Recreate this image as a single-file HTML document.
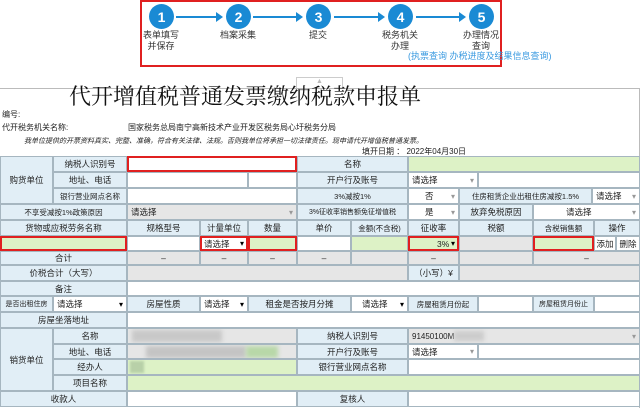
<!DOCTYPE html><html><head><meta charset="utf-8"><style>
body{margin:0;width:640px;height:407px;overflow:hidden;background:#fff;font-family:"Liberation Sans","Noto Sans CJK SC",sans-serif;position:relative}
.c{position:absolute;box-sizing:border-box;border:1px solid #a6b6c0;font-size:8.5px;color:#222;display:flex;align-items:center;justify-content:center;white-space:nowrap;overflow:hidden}
.l{background:#e1eef6}.w{background:#fff}.g{background:#ddf2c6}.y{background:#e6e6e6}
.r{outline:2px solid #e02020;outline-offset:-2px}
.s{justify-content:flex-start;padding-left:3px}
.s::after{content:"▾";position:absolute;right:3px;font-size:8px;color:#999}
.k::after{color:#000}
.sm{font-size:7.5px}
.t{position:absolute;font-size:9px;color:#222;white-space:nowrap}
.circ{position:absolute;width:25px;height:25px;border-radius:50%;background:#1a8ad4;color:#fff;font-weight:bold;font-size:14px;display:flex;align-items:center;justify-content:center;top:4px}
.ar{position:absolute;top:16px;height:2px;background:#1a8ad4}
.ar::after{content:"";position:absolute;right:-2px;top:-4px;border-left:7px solid #1a8ad4;border-top:5px solid transparent;border-bottom:5px solid transparent}
.lb{position:absolute;top:30px;font-size:9px;color:#333;text-align:center;line-height:11px;width:50px}
</style></head><body>
<div style="position:absolute;left:140px;top:0;width:362px;height:67px;border:2px solid #e02020;box-sizing:border-box"></div>
<div class="circ" style="left:149px">1</div><div class="circ" style="left:226px">2</div><div class="circ" style="left:306px">3</div><div class="circ" style="left:388px">4</div><div class="circ" style="left:469px">5</div>
<div class="ar" style="left:176px;width:45px"></div><div class="ar" style="left:253px;width:48px"></div><div class="ar" style="left:334px;width:49px"></div><div class="ar" style="left:416px;width:48px"></div>
<div class="lb" style="left:136px">表单填写<br>并保存</div><div class="lb" style="left:213px">档案采集</div><div class="lb" style="left:293px">提交</div><div class="lb" style="left:375px">税务机关<br>办理</div><div class="lb" style="left:456px">办理情况<br>查询</div>
<div class="t" style="left:408px;top:49px;color:#3a9ae0">(执票查询 办税进度及结果信息查询)</div>
<div style="position:absolute;left:296px;top:77px;width:47px;height:12px;border:1px solid #ccc;border-bottom:none;box-sizing:border-box;font-size:7px;color:#bbb;text-align:center">▲</div>
<div style="position:absolute;left:0;top:88px;width:640px;height:320px;border-top:1px solid #bbb;border-right:1px solid #bbb;box-sizing:border-box"></div>
<div style="position:absolute;left:69px;top:80px;font-size:22px;font-family:'Noto Serif CJK SC','Noto Sans CJK SC',serif;color:#111">代开增值税普通发票缴纳税款申报单</div>
<div class="t" style="left:2px;top:109px;font-size:8px">编号:</div>
<div class="t" style="left:2px;top:122px;font-size:8px">代开税务机关名称:</div>
<div class="t" style="left:128px;top:122px;font-size:8px">国家税务总局南宁高新技术产业开发区税务局心圩税务分局</div>
<div class="t" style="left:24px;top:136px;font-size:7px;font-style:italic">我单位提供的开票资料真实、完整、准确，符合有关法律、法规。否则我单位将承担一切法律责任。现申请代开增值税普通发票。</div>
<div class="t" style="left:362px;top:146px;font-size:8px">填开日期 ： 2022年04月30日</div>

<div class="c l" style="left:0;top:156px;width:53px;height:48px">购货单位</div>
<div class="c l" style="left:53px;top:156px;width:74px;height:16px">纳税人识别号</div>
<div class="c w r" style="left:127px;top:156px;width:170px;height:16px"></div>
<div class="c l" style="left:297px;top:156px;width:111px;height:16px">名称</div>
<div class="c g" style="left:408px;top:156px;width:232px;height:16px"></div>

<div class="c l" style="left:53px;top:172px;width:74px;height:16px">地址、电话</div>
<div class="c w" style="left:127px;top:172px;width:121px;height:16px"></div>
<div class="c w" style="left:248px;top:172px;width:49px;height:16px"></div>
<div class="c l" style="left:297px;top:172px;width:111px;height:16px">开户行及账号</div>
<div class="c w s" style="left:408px;top:172px;width:70px;height:16px">请选择</div>
<div class="c w" style="left:478px;top:172px;width:162px;height:16px"></div>

<div class="c l sm" style="left:53px;top:188px;width:74px;height:16px">银行营业网点名称</div>
<div class="c w" style="left:127px;top:188px;width:170px;height:16px"></div>
<div class="c l sm" style="left:297px;top:188px;width:111px;height:16px">3%减按1%</div>
<div class="c w s" style="left:408px;top:188px;width:51px;height:16px;padding-left:16px">否</div>
<div class="c l sm" style="left:459px;top:188px;width:133px;height:16px">住房租赁企业出租住房减按1.5%</div>
<div class="c w s" style="left:592px;top:188px;width:48px;height:16px">请选择</div>

<div class="c l sm" style="left:0;top:204px;width:127px;height:16px">不享受减按1%政策原因</div>
<div class="c y s" style="left:127px;top:204px;width:170px;height:16px">请选择</div>
<div class="c l sm" style="left:297px;top:204px;width:111px;height:16px;font-size:7px">3%征收率销售额免征增值税</div>
<div class="c w s" style="left:408px;top:204px;width:51px;height:16px;padding-left:16px">是</div>
<div class="c l" style="left:459px;top:204px;width:74px;height:16px">放弃免税原因</div>
<div class="c w s" style="left:533px;top:204px;width:107px;height:16px;padding-left:32px">请选择</div>

<div class="c l" style="left:0;top:220px;width:127px;height:16px">货物或应税劳务名称</div>
<div class="c l" style="left:127px;top:220px;width:73px;height:16px">规格型号</div>
<div class="c l" style="left:200px;top:220px;width:48px;height:16px">计量单位</div>
<div class="c l" style="left:248px;top:220px;width:49px;height:16px">数量</div>
<div class="c l" style="left:297px;top:220px;width:54px;height:16px">单价</div>
<div class="c l sm" style="left:351px;top:220px;width:57px;height:16px">金额(不含税)</div>
<div class="c l" style="left:408px;top:220px;width:51px;height:16px">征收率</div>
<div class="c l" style="left:459px;top:220px;width:74px;height:16px">税额</div>
<div class="c l sm" style="left:533px;top:220px;width:61px;height:16px">含税销售额</div>
<div class="c l" style="left:594px;top:220px;width:46px;height:16px">操作</div>

<div class="c g r" style="left:0;top:236px;width:127px;height:15px"></div>
<div class="c w" style="left:127px;top:236px;width:73px;height:15px"></div>
<div class="c w s k r" style="left:200px;top:236px;width:48px;height:15px">请选择</div>
<div class="c g r" style="left:248px;top:236px;width:49px;height:15px"></div>
<div class="c w" style="left:297px;top:236px;width:54px;height:15px"></div>
<div class="c g" style="left:351px;top:236px;width:57px;height:15px"></div>
<div class="c g s k r" style="left:408px;top:236px;width:51px;height:15px;padding-left:28px">3%</div>
<div class="c y" style="left:459px;top:236px;width:74px;height:15px"></div>
<div class="c g r" style="left:533px;top:236px;width:61px;height:15px"></div>
<div class="c w" style="left:594px;top:236px;width:22px;height:15px">添加</div>
<div class="c w" style="left:616px;top:236px;width:24px;height:15px">删除</div>

<div class="c l" style="left:0;top:251px;width:127px;height:14px">合计</div>
<div class="c y" style="left:127px;top:251px;width:73px;height:14px">–</div>
<div class="c y" style="left:200px;top:251px;width:48px;height:14px">–</div>
<div class="c y" style="left:248px;top:251px;width:49px;height:14px">–</div>
<div class="c y" style="left:297px;top:251px;width:54px;height:14px">–</div>
<div class="c y" style="left:351px;top:251px;width:57px;height:14px"></div>
<div class="c y" style="left:408px;top:251px;width:51px;height:14px">–</div>
<div class="c y" style="left:459px;top:251px;width:74px;height:14px"></div>
<div class="c y" style="left:533px;top:251px;width:107px;height:14px">–</div>

<div class="c l" style="left:0;top:265px;width:127px;height:16px">价税合计（大写）</div>
<div class="c y" style="left:127px;top:265px;width:281px;height:16px"></div>
<div class="c l" style="left:408px;top:265px;width:51px;height:16px">（小写）¥</div>
<div class="c y" style="left:459px;top:265px;width:181px;height:16px"></div>

<div class="c l" style="left:0;top:281px;width:127px;height:15px">备注</div>
<div class="c w" style="left:127px;top:281px;width:513px;height:15px"></div>

<div class="c l sm" style="left:0;top:296px;width:53px;height:16px;font-size:7px">是否出租住房</div>
<div class="c w s k" style="left:53px;top:296px;width:74px;height:16px">请选择</div>
<div class="c l" style="left:127px;top:296px;width:73px;height:16px">房屋性质</div>
<div class="c w s k" style="left:200px;top:296px;width:48px;height:16px">请选择</div>
<div class="c l" style="left:248px;top:296px;width:103px;height:16px">租金是否按月分摊</div>
<div class="c w s k" style="left:351px;top:296px;width:57px;height:16px;padding-left:10px">请选择</div>
<div class="c l sm" style="left:408px;top:296px;width:70px;height:16px">房屋租赁月份起</div>
<div class="c w" style="left:478px;top:296px;width:55px;height:16px"></div>
<div class="c l sm" style="left:533px;top:296px;width:61px;height:16px;font-size:7px">房屋租赁月份止</div>
<div class="c w" style="left:594px;top:296px;width:46px;height:16px"></div>

<div class="c l" style="left:0;top:312px;width:127px;height:16px">房屋坐落地址</div>
<div class="c w" style="left:127px;top:312px;width:513px;height:16px"></div>

<div class="c l" style="left:0;top:328px;width:53px;height:63px">销货单位</div>
<div class="c l" style="left:53px;top:328px;width:74px;height:16px">名称</div>
<div class="c y" style="left:127px;top:328px;width:170px;height:16px"><div style="width:90px;height:12px;background:#c8c8c8;margin-right:70px;filter:blur(2px)"></div></div>
<div class="c l" style="left:297px;top:328px;width:111px;height:16px">纳税人识别号</div>
<div class="c y s" style="left:408px;top:328px;width:232px;height:16px;font-size:8px">91450100M<span style="display:inline-block;width:30px;height:10px;background:#ccc;filter:blur(2px)"></span></div>

<div class="c l" style="left:53px;top:344px;width:74px;height:15px">地址、电话</div>
<div class="c y" style="left:127px;top:344px;width:170px;height:15px"><div style="width:100px;height:12px;background:#c4c4c4;filter:blur(2px)"></div><div style="width:32px;height:12px;background:#b8d8a8;filter:blur(2px)"></div></div>
<div class="c l" style="left:297px;top:344px;width:111px;height:15px">开户行及账号</div>
<div class="c w s" style="left:408px;top:344px;width:70px;height:15px">请选择</div>
<div class="c w" style="left:478px;top:344px;width:162px;height:15px"></div>

<div class="c l" style="left:53px;top:359px;width:74px;height:16px">经办人</div>
<div class="c g" style="left:127px;top:359px;width:170px;height:16px;justify-content:flex-start"><div style="width:14px;height:12px;background:#b8d0a8;margin-left:2px;filter:blur(1px)"></div></div>
<div class="c l" style="left:297px;top:359px;width:111px;height:16px">银行营业网点名称</div>
<div class="c w" style="left:408px;top:359px;width:232px;height:16px"></div>

<div class="c l" style="left:53px;top:375px;width:74px;height:16px">项目名称</div>
<div class="c g" style="left:127px;top:375px;width:513px;height:16px"></div>

<div class="c l" style="left:0;top:391px;width:127px;height:16px">收款人</div>
<div class="c w" style="left:127px;top:391px;width:170px;height:16px"></div>
<div class="c l" style="left:297px;top:391px;width:111px;height:16px">复核人</div>
<div class="c w" style="left:408px;top:391px;width:232px;height:16px"></div>
</body></html>
